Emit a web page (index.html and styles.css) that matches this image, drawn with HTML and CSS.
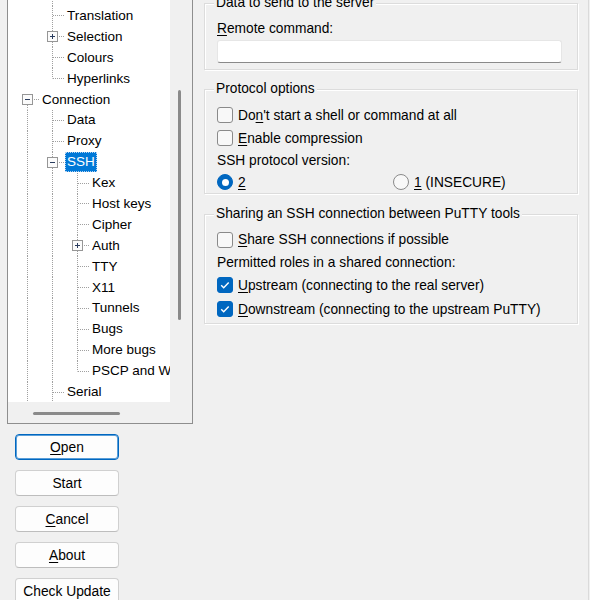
FILE: index.html
```html
<!DOCTYPE html>
<html>
<head>
<meta charset="utf-8">
<link rel="stylesheet" href="styles.css">
</head>
<body>
<div class="app">
  <div class="left">
    <div class="tree">
      <div class="tree-body">
        <div class="row"><span class="c"></span><span class="c tee"></span><span class="lbl">Appearance</span></div>
        <div class="row"><span class="c"></span><span class="c tee"></span><span class="lbl">Behaviour</span></div>
        <div class="row"><span class="c"></span><span class="c tee"></span><span class="lbl">Translation</span></div>
        <div class="row"><span class="c"></span><span class="c tee"><svg class="exp" width="11" height="11" viewBox="0 0 11 11"><rect x="0.5" y="0.5" width="10" height="10" fill="#fbfbfb" stroke="#969696"/><path d="M3 5.5h5M5.5 3v5" stroke="#2a3c5e"/></svg></span><span class="lbl">Selection</span></div>
        <div class="row"><span class="c"></span><span class="c tee"></span><span class="lbl">Colours</span></div>
        <div class="row"><span class="c"></span><span class="c elbow"></span><span class="lbl">Hyperlinks</span></div>
        <div class="row"><span class="c down"><svg class="exp" width="11" height="11" viewBox="0 0 11 11"><rect x="0.5" y="0.5" width="10" height="10" fill="#fbfbfb" stroke="#969696"/><path d="M3 5.5h5" stroke="#2a3c5e"/></svg></span><span class="lbl">Connection</span></div>
        <div class="row"><span class="c v"></span><span class="c tee"></span><span class="lbl">Data</span></div>
        <div class="row"><span class="c v"></span><span class="c tee"></span><span class="lbl">Proxy</span></div>
        <div class="row"><span class="c v"></span><span class="c tee"><svg class="exp" width="11" height="11" viewBox="0 0 11 11"><rect x="0.5" y="0.5" width="10" height="10" fill="#fbfbfb" stroke="#969696"/><path d="M3 5.5h5" stroke="#2a3c5e"/></svg></span><span class="lbl sel">SSH</span></div>
        <div class="row"><span class="c v"></span><span class="c v"></span><span class="c tee"></span><span class="lbl">Kex</span></div>
        <div class="row"><span class="c v"></span><span class="c v"></span><span class="c tee"></span><span class="lbl">Host keys</span></div>
        <div class="row"><span class="c v"></span><span class="c v"></span><span class="c tee"></span><span class="lbl">Cipher</span></div>
        <div class="row"><span class="c v"></span><span class="c v"></span><span class="c tee"><svg class="exp" width="11" height="11" viewBox="0 0 11 11"><rect x="0.5" y="0.5" width="10" height="10" fill="#fbfbfb" stroke="#969696"/><path d="M3 5.5h5M5.5 3v5" stroke="#2a3c5e"/></svg></span><span class="lbl">Auth</span></div>
        <div class="row"><span class="c v"></span><span class="c v"></span><span class="c tee"></span><span class="lbl">TTY</span></div>
        <div class="row"><span class="c v"></span><span class="c v"></span><span class="c tee"></span><span class="lbl">X11</span></div>
        <div class="row"><span class="c v"></span><span class="c v"></span><span class="c tee"></span><span class="lbl">Tunnels</span></div>
        <div class="row"><span class="c v"></span><span class="c v"></span><span class="c tee"></span><span class="lbl">Bugs</span></div>
        <div class="row"><span class="c v"></span><span class="c v"></span><span class="c tee"></span><span class="lbl">More bugs</span></div>
        <div class="row"><span class="c v"></span><span class="c v"></span><span class="c elbow"></span><span class="lbl">PSCP and WinSCP</span></div>
        <div class="row"><span class="c v"></span><span class="c tee"></span><span class="lbl">Serial</span></div>
        <div class="row"><span class="c v"></span><span class="c tee"></span><span class="lbl">Telnet</span></div>
      </div>
      <div class="vscroll"><div class="vthumb"></div></div>
      <div class="hscroll"><div class="hthumb"></div></div>
      <div class="corner"></div>
    </div>
    <div class="buttons">
      <button class="btn default"><u>O</u>pen</button>
      <button class="btn">Start</button>
      <button class="btn"><u>C</u>ancel</button>
      <button class="btn"><u>A</u>bout</button>
      <button class="btn">Check Update</button>
    </div>
  </div>

  <div class="right">
    <div class="group g1">
      <div class="gtitle">Data to send to the server</div>
      <div class="line lbl-row"><span><u>R</u>emote command:</span></div>
      <div class="input"></div>
    </div>

    <div class="group g2">
      <div class="gtitle">Protocol options</div>
      <div class="line h23"><span class="cb"></span><span>Do<u>n</u>'t start a shell or command at all</span></div>
      <div class="line h23"><span class="cb"></span><span><u>E</u>nable compression</span></div>
      <div class="line h22"><span>SSH protocol version:</span></div>
      <div class="line h21 radios">
        <div class="ropt first"><span class="rb on"><span class="dot"></span></span><span><u>2</u></span></div>
        <div class="ropt"><span class="rb"></span><span><u>1</u> (INSECURE)</span></div>
      </div>
    </div>

    <div class="group g3">
      <div class="gtitle">Sharing an SSH connection between PuTTY tools</div>
      <div class="line h225"><span class="cb"></span><span><u>S</u>hare SSH connections if possible</span></div>
      <div class="line h225"><span>Permitted roles in a shared connection:</span></div>
      <div class="line h23"><span class="cb on"><svg width="12" height="12" viewBox="0 0 12 12"><path d="M2.2 6.3l2.5 2.5 5-5.3" fill="none" stroke="#fff" stroke-width="1.4"/></svg></span><span><u>U</u>pstream (connecting to the real server)</span></div>
      <div class="line h25"><span class="cb on"><svg width="12" height="12" viewBox="0 0 12 12"><path d="M2.2 6.3l2.5 2.5 5-5.3" fill="none" stroke="#fff" stroke-width="1.4"/></svg></span><span><u>D</u>ownstream (connecting to the upstream PuTTY)</span></div>
    </div>
  </div>
</div>
</body>
</html>
```

FILE: styles.css
```css
:root {
  --dotv: repeating-linear-gradient(to bottom, #a0a0a0 0 1px, transparent 1px 2px);
  --doth: repeating-linear-gradient(to right, #a0a0a0 0 1px, transparent 1px 2px);
}
* { box-sizing: border-box; }
html, body { margin: 0; padding: 0; }
body {
  background: #f0f0f0;
  font-family: "Liberation Sans", Arial, sans-serif;
  font-size: 13.5px;
  color: #000;
  height: 600px;
  overflow: hidden;
}
u { text-decoration-thickness: 1px; text-underline-offset: 2px; }

.app {
  display: flex;
  align-items: flex-start;
  height: 600px;
}

/* ---------- left column ---------- */
.left {
  flex: none;
  width: 186px;
  margin-left: 7px;
  display: flex;
  flex-direction: column;
}
.tree {
  margin-top: -37.25px;
  border: 1px solid #8e8e8e;
  display: grid;
  grid-template-columns: 162px 22px;
  grid-template-rows: 438.25px 21px;
  background: #f0f0f0;
}
.tree-body {
  background: #fff;
  overflow: hidden;
}
.row {
  display: flex;
  align-items: center;
  height: 20.9px;
  padding-left: 7px;
  white-space: nowrap;
}
.c {
  flex: none;
  width: 25px;
  height: 100%;
  display: flex;
  align-items: center;
}
.v { background: var(--dotv) 12px 0 / 1px 100% no-repeat; }
.tee {
  background: var(--doth) 13px 50% / 12px 1px no-repeat,
              var(--dotv) 12px 0 / 1px 100% no-repeat;
}
.elbow {
  background: var(--doth) 13px 50% / 12px 1px no-repeat,
              var(--dotv) 12px 0 / 1px 50% no-repeat;
}
.down {
  background: var(--doth) 13px 50% / 12px 1px no-repeat,
              var(--dotv) 12px 100% / 1px 50% no-repeat;
}
.exp { margin-left: 7px; display: block; }
.lbl {
  margin-left: 2px;
  line-height: 20px;
}
.lbl.sel {
  margin-left: 0;
  padding: 0 2px;
  background: #0078d7;
  color: #fff;
  outline: 1px dotted #b7d3f0;
  outline-offset: -1px;
}
.vscroll { grid-column: 2; grid-row: 1; }
.vthumb {
  margin: 126.25px 0 0 8px;
  width: 3px;
  height: 230px;
  border-radius: 2px;
  background: #8a8a8a;
}
.hscroll { grid-column: 1; grid-row: 2; padding: 9.5px 0 0 25px; }
.hthumb {
  width: 87px;
  height: 3px;
  border-radius: 2px;
  background: #8a8a8a;
}
.corner { grid-column: 2; grid-row: 2; }

.buttons {
  display: flex;
  flex-direction: column;
  gap: 10px;
  margin: 10px 0 0 8px;
}
.btn {
  width: 104px;
  height: 26px;
  padding: 0;
  background: #fdfdfd;
  border: 1px solid #d0d0d0;
  border-bottom-color: #bdbdbd;
  border-radius: 4px;
  font-family: inherit;
  font-size: 13.8px;
  color: #000;
}
.btn.default {
  border: 1px solid #0067c0;
  box-shadow: inset 0 0 0 1px #5a9ed8;
}

/* ---------- right column ---------- */
.right {
  flex: none;
  width: 385px;
  margin-left: 11px;
  padding-right: 10px;
  border-right: 1px solid #dadada;
  align-self: stretch;
  font-size: 13.75px;
}
.group {
  border: 1px solid #dcdcdc;
  box-shadow: inset 1px 1px 0 #fff, 1px 1px 0 #fff;
  padding: 0 15px 0 12px;
}
.gtitle {
  width: max-content;
  height: 18px;
  line-height: 18px;
  margin: -10px 0 0 -3px;
  padding: 0 2px;
  background: #f0f0f0;
  position: relative;
}
.g1 { margin-top: 3px; padding-bottom: 6px; }
.g2 { margin-top: 19px; }
.g3 { margin-top: 20.5px; padding-bottom: 1.5px; }

.line {
  display: flex;
  align-items: center;
  gap: 5px;
  white-space: nowrap;
}
.lbl-row { height: 22px; margin-top: 5px; }
.g2 .gtitle + .line, .g3 .gtitle + .line { margin-top: 5.5px; }
.h21 { height: 21px; }
.h22 { height: 22px; }
.h225 { height: 22.5px; }
.h23 { height: 23px; }
.h25 { height: 25px; }

.input {
  margin-top: 1px;
  width: 345px;
  height: 23px;
  background: #fff;
  border: 1px solid #e6e6e6;
  border-bottom-color: #8a8a8a;
  border-radius: 3px;
}

.cb {
  flex: none;
  width: 16px;
  height: 16px;
  border: 1px solid #8a8a8a;
  border-radius: 3px;
  background: #f8f8f8;
  display: flex;
  align-items: center;
  justify-content: center;
}
.cb.on { background: #0067c0; border-color: #0067c0; }

.radios { gap: 0; }
.ropt { display: flex; align-items: center; gap: 5px; }
.ropt.first { width: 176px; }
.rb {
  flex: none;
  width: 16px;
  height: 16px;
  border: 1px solid #8a8a8a;
  border-radius: 50%;
  background: #f8f8f8;
  display: flex;
  align-items: center;
  justify-content: center;
}
.rb.on { background: #0067c0; border-color: #0067c0; }
.rb .dot { width: 7px; height: 7px; border-radius: 50%; background: #fff; }
```
